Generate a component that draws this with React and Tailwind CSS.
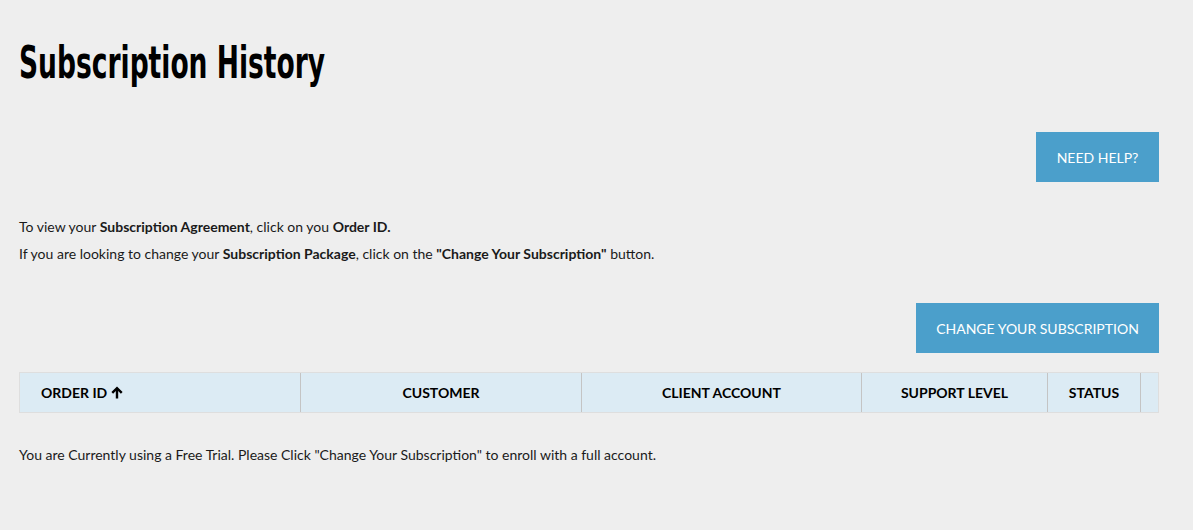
const cols = [
  { label: 'CUSTOMER', w: 'w-[281px]' },
  { label: 'CLIENT ACCOUNT', w: 'w-[280px]' },
  { label: 'SUPPORT LEVEL', w: 'w-[186px]' },
  { label: 'STATUS', w: 'w-[93px]' },
];

function SortUp() {
  return (
    <svg width="12" height="13" viewBox="0 0 12 13" fill="currentColor">
      <path d="M6 0.5 L11.6 6.1 L9.9 7.8 L7.2 5.1 L7.2 12.5 L4.8 12.5 L4.8 5.1 L2.1 7.8 L0.4 6.1 Z" />
    </svg>
  );
}

export default function App() {
  return (
    <div className="min-h-[530px] bg-[#eeeeee] px-[19px] pt-[36px] text-[#111] font-['Lato','Liberation_Sans',sans-serif] w-[1193px]">
      <h1 className="text-[45px] leading-[54px] font-bold text-black font-['DejaVu_Sans_Condensed',sans-serif] [transform:scaleX(0.655)] origin-left whitespace-nowrap">
        Subscription History
      </h1>

      <div className="flex justify-end mr-[15px] mt-[42px]">
        <button className="w-[123px] h-[50px] bg-[#4b9fcb] text-white text-[14px] uppercase">
          Need Help?
        </button>
      </div>

      <div className="mt-[31px] text-[14px] leading-[27px] text-[#1a1a1a]">
        <p>
          To view your <b>Subscription Agreement</b>, click on you <b>Order ID.</b>
        </p>
        <p>
          If you are looking to change your <b>Subscription Package</b>, click on the{' '}
          <b>"Change Your Subscription"</b> button.
        </p>
      </div>

      <div className="flex justify-end mr-[15px] mt-[36px]">
        <button className="w-[243px] h-[50px] bg-[#4b9fcb] text-white text-[14px] uppercase">
          Change Your Subscription
        </button>
      </div>

      <div className="mt-[19px] mr-[15px] flex h-[41px] bg-[#dcebf4] border border-[#dedede] text-[14px] font-bold text-black">
        <div className="w-[281px] flex items-center gap-[4px] pl-[21px] border-r border-[#c4c4c4]">
          ORDER ID <SortUp />
        </div>
        {cols.map((c) => (
          <div
            key={c.label}
            className={`${c.w} flex items-center justify-center border-r border-[#c4c4c4]`}
          >
            {c.label}
          </div>
        ))}
        <div className="flex-1" />
      </div>

      <p className="mt-[31px] text-[14px] text-[#1a1a1a]">
        You are Currently using a Free Trial. Please Click "Change Your Subscription" to enroll with a full account.
      </p>
    </div>
  );
}
